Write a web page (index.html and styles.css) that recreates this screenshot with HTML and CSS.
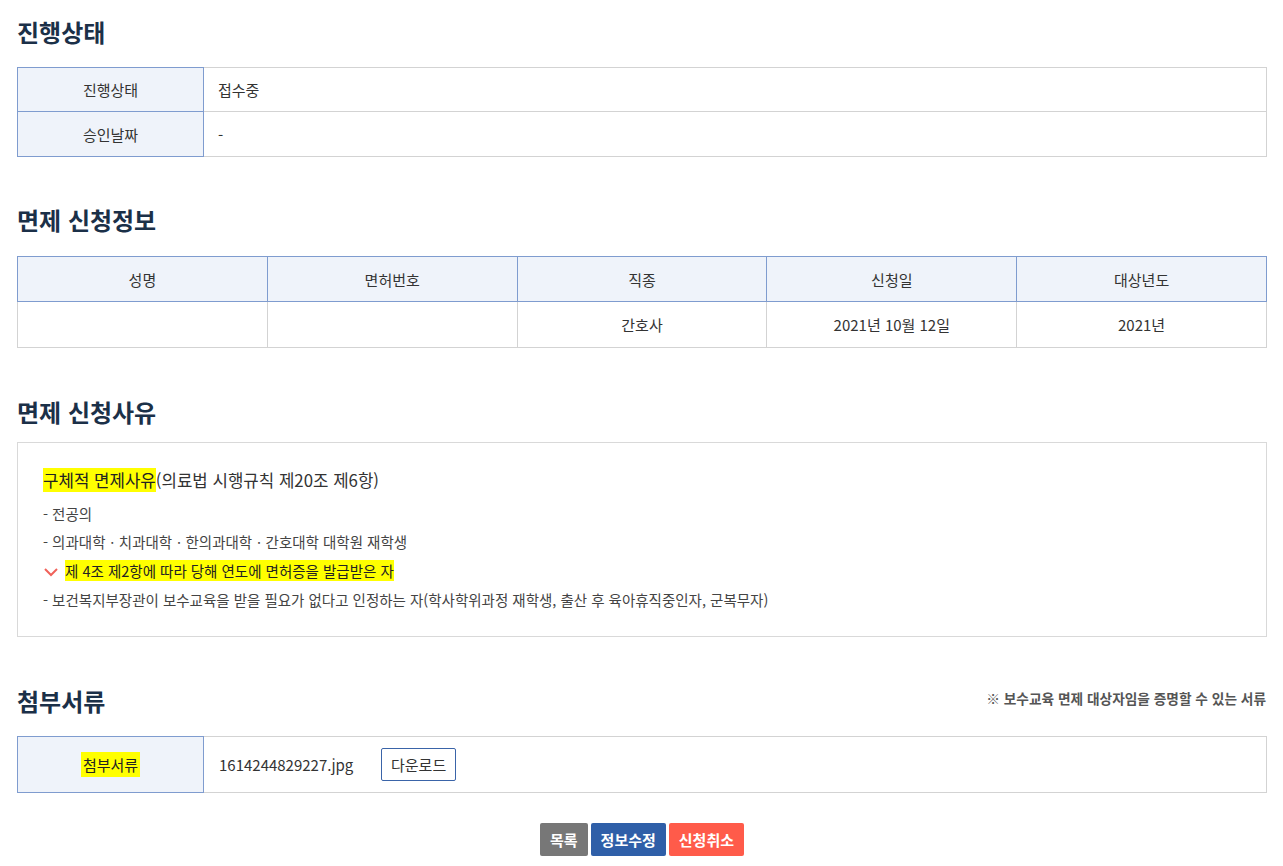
FILE: index.html
```
<!DOCTYPE html>
<html lang="ko">

<head>
  <meta charset="UTF-8">
  <meta name="viewport" content="width=device-width, initial-scale=1.0">
  <title>면제 신청 상세</title>
  <link rel="stylesheet" href="styles.css">
</head>

<body>
  <div class="wrap">
    <h2 class="title">진행상태</h2>
    <table class="tblRow tblState">
      <tr>
        <th>진행상태</th>
        <td>접수중</td>
      </tr>
      <tr>
        <th class="tall">승인날짜</th>
        <td>-</td>
      </tr>
    </table>

    <h2 class="title">면제 신청정보</h2>
    <table class="tblCol">
      <tr>
        <th>성명</th>
        <th>면허번호</th>
        <th>직종</th>
        <th>신청일</th>
        <th>대상년도</th>
      </tr>
      <tr>
        <td><span class="blur">&nbsp;</span></td>
        <td><span class="blur">&nbsp;</span></td>
        <td>간호사</td>
        <td>2021년 10월 12일</td>
        <td>2021년</td>
      </tr>
    </table>

    <h2 class="title">면제 신청사유</h2>
    <div class="reasonBox">
      <p class="reasonTit"><mark>구체적 면제사유</mark>(의료법 시행규칙 제20조 제6항)</p>
      <ul class="reasonList">
        <li>- 전공의</li>
        <li>- 의과대학ㆍ치과대학ㆍ한의과대학ㆍ간호대학 대학원 재학생</li>
        <li class="checked">
          <svg class="check" width="16" height="12" viewBox="0 0 16 12">
            <path d="M2 3 L8 9 L14 3" fill="none" stroke="#f0625a" stroke-width="2" />
          </svg>
          <mark>제 4조 제2항에 따라 당해 연도에 면허증을 발급받은 자</mark>
        </li>
        <li>- 보건복지부장관이 보수교육을 받을 필요가 없다고 인정하는 자(학사학위과정 재학생, 출산 후 육아휴직중인자, 군복무자)</li>
      </ul>
    </div>

    <div class="titleRow">
      <h2 class="title">첨부서류</h2>
      <span class="note">※ 보수교육 면제 대상자임을 증명할 수 있는 서류</span>
    </div>
    <table class="tblRow tblFile">
      <tr>
        <th><mark class="markPad">첨부서류</mark></th>
        <td><span class="fileName">1614244829227.jpg</span><a class="btnLine" href="#">다운로드</a></td>
      </tr>
    </table>

    <div class="btnArea">
      <a class="btn gray" href="#">목록</a>
      <a class="btn blue" href="#">정보수정</a>
      <a class="btn red" href="#">신청취소</a>
    </div>
  </div>
</body>

</html>
```

FILE: styles.css
```
html,
body {
  margin: 0;
  padding: 0;
  background-color: #fff;
}

body {
  font-family: "Noto Sans CJK KR", "Noto Sans", sans-serif;
  color: #333;
  font-size: 15px;
}

.wrap {
  width: 1250px;
  padding: 14px 16px 0 17px;
}

.title {
  margin: 0;
  height: 36px;
  line-height: 36px;
  font-size: 24px;
  font-weight: 700;
  color: #1b3048;
}

table {
  width: 100%;
  border-collapse: collapse;
  table-layout: fixed;
}

.tblRow {
  margin: 17px 0 45px;
}

.tblRow th {
  width: 185px;
  height: 43px;
  background-color: #eff3fa;
  border: 1px solid #7f9ccf;
  font-weight: 400;
  color: #333;
  text-align: center;
  padding: 0;
}

.tblRow th.tall {
  height: 44px;
}

.tblRow td {
  border-top: 1px solid #d3d3d3;
  border-bottom: 1px solid #d3d3d3;
  border-right: 1px solid #d3d3d3;
  padding: 0 14px;
}

.tblCol {
  margin: 18px 0 46px;
}

.tblCol th {
  height: 44px;
  background-color: #eff3fa;
  border: 1px solid #7f9ccf;
  font-weight: 400;
  color: #333;
  padding: 0;
}

.tblCol td {
  height: 45px;
  border: 1px solid #d3d3d3;
  border-top: none;
  text-align: center;
  padding: 0;
}

.blur {
  display: inline-block;
  width: 40px;
}

.reasonBox {
  margin: 12px 0 46px;
  border: 1px solid #d9d9d9;
  padding: 23px 25px 22px;
}

.reasonTit {
  margin: 0 0 6px;
  font-size: 16.8px;
  line-height: 28px;
  color: #333;
}

mark {
  background-color: #ffff00;
  color: #222;
}

.markPad {
  padding: 2px 2px;
}

.reasonList {
  list-style: none;
  margin: 0;
  padding: 0;
}

.reasonList li {
  font-size: 14.5px;
  line-height: 28px;
  color: #444;
}

.reasonList li.checked {
  margin: 1px 0;
}

.check {
  vertical-align: -1px;
  margin-right: 2px;
}

.titleRow {
  display: flex;
  justify-content: space-between;
  align-items: center;
}

.note {
  font-size: 13.7px;
  font-weight: 700;
  color: #555;
  padding: 0 1px 6px 0;
}

.tblFile {
  margin: 17px 0 30px;
}

.tblFile th {
  height: 55px;
}

.fileName {
  display: inline-block;
  width: 162px;
  margin-left: 1px;
}

.btnLine {
  display: inline-block;
  height: 31px;
  line-height: 31px;
  padding: 0 9px;
  border: 1px solid #3a64a8;
  border-radius: 2px;
  color: #333;
  text-decoration: none;
  font-size: 15px;
}

.btnArea {
  display: flex;
  justify-content: center;
  gap: 3px;
}

.btn {
  display: inline-block;
  height: 33px;
  line-height: 33px;
  padding: 0 10px;
  border-radius: 2px;
  color: #fff;
  font-weight: 700;
  font-size: 15px;
  text-decoration: none;
}

.btn.gray {
  background-color: #777;
}

.btn.blue {
  background-color: #2f5fa8;
}

.btn.red {
  background-color: #ff5b4a;
}
```
